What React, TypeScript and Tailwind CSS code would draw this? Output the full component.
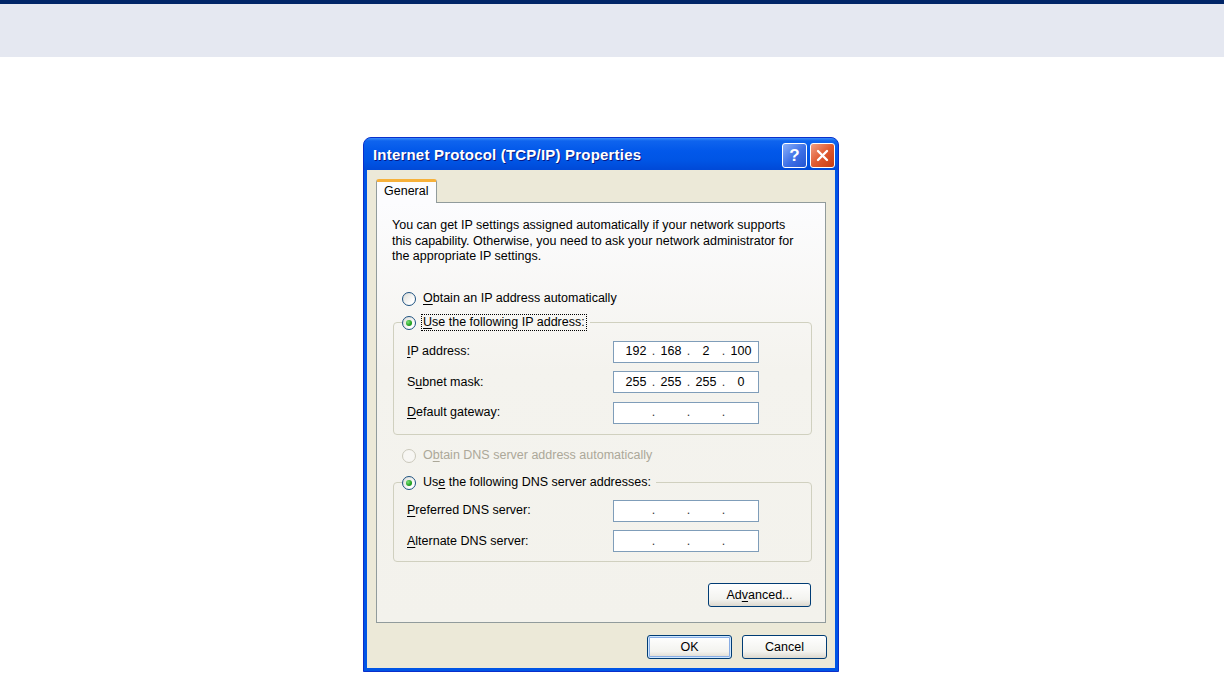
import { Fragment, type ReactNode } from "react";

// Windows XP style "Internet Protocol (TCP/IP) Properties" dialog

function Radio({ checked = false, disabled = false }: { checked?: boolean; disabled?: boolean }) {
  return (
    <span
      className={`flex h-[14px] w-[14px] shrink-0 items-center justify-center rounded-full border ${
        disabled
          ? "border-[#CAC8BB] bg-[#F7F6F3]"
          : "border-[#1C5180] bg-[linear-gradient(135deg,#DCDCD7,#FFFFFF_75%)]"
      }`}
    >
      {checked && (
        <span className="h-[6px] w-[6px] rounded-full bg-[radial-gradient(circle_at_35%_35%,#7BE27A,#21A121_60%,#1A7F1A)]" />
      )}
    </span>
  );
}

function U({ children }: { children: ReactNode }) {
  return <span className="underline decoration-1 underline-offset-[2px]">{children}</span>;
}

function IpField({ parts = ["", "", "", ""] }: { parts?: string[] }) {
  return (
    <div className="flex h-[22px] w-[146px] items-center border border-[#7F9DB9] bg-white pl-[7px] leading-none">
      {parts.map((v, i) => (
        <Fragment key={i}>
          <span className="w-[30px] text-center">{v}</span>
          {i < 3 && <span className="w-[5px] text-center text-[#333]">.</span>}
        </Fragment>
      ))}
    </div>
  );
}

function FieldRow({ label, parts }: { label: ReactNode; parts?: string[] }) {
  return (
    <div className="flex h-[22px] items-center pl-[13px]">
      <span className="w-[206px]">{label}</span>
      <IpField parts={parts} />
    </div>
  );
}

function RadioLabel({
  checked,
  disabled,
  focus,
  children,
}: {
  checked?: boolean;
  disabled?: boolean;
  focus?: boolean;
  children: ReactNode;
}) {
  return (
    <span className="flex h-[16px] items-center gap-[5px]">
      <Radio checked={checked} disabled={disabled} />
      <span
        className={`px-px leading-[15px] ${disabled ? "text-[#ACA899]" : "text-black"} ${
          focus ? "border border-dotted border-black" : "border border-transparent"
        }`}
      >
        {children}
      </span>
    </span>
  );
}

function XpButton({ children, className, isDefault }: { children: ReactNode; className: string; isDefault?: boolean }) {
  return (
    <button
      className={`h-[24px] rounded-[3px] border border-[#003C74] bg-[linear-gradient(to_bottom,#FFFFFF,#F3F3EF_70%,#DCD8CE)] text-[12.5px] text-black ${
        isDefault ? "shadow-[inset_0_0_0_1px_#CEE7FF,inset_0_0_0_2px_#89ADE4]" : ""
      } ${className}`}
    >
      {children}
    </button>
  );
}

export default function App() {
  return (
    <div className="min-h-screen bg-white font-['Liberation_Sans',Arial,sans-serif] text-[12.5px] text-black">
      <div className="h-[4px] bg-[#002568]" />
      <div className="h-[53px] bg-[#E5E8F1]" />

      <div className="pl-[363px] pt-[80px]">
        <div className="w-[476px] rounded-t-[8px] border border-[#0A2FCB] bg-[#0055E5]">
          {/* title bar */}
          <div className="flex h-[32px] items-center rounded-t-[7px] bg-[linear-gradient(to_bottom,#3A8CF9_0%,#0F64EE_9%,#0258EA_40%,#0055E5_70%,#0049D7_100%)] pl-[9px] pr-[3px] pt-[2px]">
            <span className="text-[15px] font-bold tracking-[0.2px] text-white [text-shadow:1px_1px_0_#0A1883]">
              Internet Protocol (TCP/IP) Properties
            </span>
            <div className="ml-auto flex gap-[3px]">
              <div className="flex h-[25px] w-[25px] items-center justify-center rounded-[3px] border border-white bg-[linear-gradient(135deg,#8AB0FA,#3C6FE6_55%,#2455D2)] text-[17px] font-bold leading-none text-white">
                ?
              </div>
              <div className="flex h-[25px] w-[25px] items-center justify-center rounded-[3px] border border-white bg-[linear-gradient(135deg,#F2A085,#E05A30_50%,#C63C14)]">
                <svg width="13" height="13" viewBox="0 0 13 13" aria-hidden>
                  <path d="M2 2L11 11M11 2L2 11" stroke="#fff" strokeWidth="2.4" strokeLinecap="round" />
                </svg>
              </div>
            </div>
          </div>

          {/* body */}
          <div className="px-[3px] pb-[3px]">
            <div className="bg-[#ECE9D8] px-[9px] pb-[9px] pt-[9px]">
              {/* tab */}
              <div className="relative z-10 -mb-px flex h-[24px] w-[61px] items-center rounded-t-[3px] border-x border-t-[3px] border-x-[#919B9C] border-t-[#F7B13A] bg-[#FCFCFE] pl-[7px] pb-[2px]">
                General
              </div>

              {/* panel */}
              <div className="border border-[#919B9C] bg-[linear-gradient(to_bottom,#FCFCFE,#F4F3EE_40%,#F3F2EC)] pb-[15px] pl-[15px] pr-[12px] pt-[15px]">
                <p className="whitespace-nowrap leading-[15.5px]">
                  You can get IP settings assigned automatically if your network supports
                  <br />
                  this capability. Otherwise, you need to ask your network administrator for
                  <br />
                  the appropriate IP settings.
                </p>

                <div className="mt-[26px] pl-[10px]">
                  <RadioLabel>
                    <U>O</U>btain an IP address automatically
                  </RadioLabel>
                </div>

                <fieldset className="ml-[1px] mt-[8px] w-[419px] rounded-[4px] border border-[#D0D0BF] pb-[10px]">
                  <legend className="ml-[8px] pr-[3px]">
                    <RadioLabel checked focus>
                      <U>U</U>se the following IP address:
                    </RadioLabel>
                  </legend>
                  <div className="flex flex-col gap-[8.5px] pt-[10px]">
                    <FieldRow label={<><U>I</U>P address:</>} parts={["192", "168", "2", "100"]} />
                    <FieldRow label={<>S<U>u</U>bnet mask:</>} parts={["255", "255", "255", "0"]} />
                    <FieldRow label={<><U>D</U>efault gateway:</>} />
                  </div>
                </fieldset>

                <div className="mt-[13px] pl-[10px]">
                  <RadioLabel disabled>
                    O<U>b</U>tain DNS server address automatically
                  </RadioLabel>
                </div>

                <fieldset className="ml-[1px] mt-[11px] w-[419px] rounded-[4px] border border-[#D0D0BF] pb-[9px]">
                  <legend className="ml-[8px] pr-[3px]">
                    <RadioLabel checked>
                      Us<U>e</U> the following DNS server addresses:
                    </RadioLabel>
                  </legend>
                  <div className="flex flex-col gap-[8.5px] pt-[9px]">
                    <FieldRow label={<><U>P</U>referred DNS server:</>} />
                    <FieldRow label={<><U>A</U>lternate DNS server:</>} />
                  </div>
                </fieldset>

                <div className="mt-[21px] flex justify-end pr-[2px]">
                  <XpButton className="w-[103px]">
                    Ad<U>v</U>anced...
                  </XpButton>
                </div>
              </div>

              {/* dialog buttons */}
              <div className="-mr-px mt-[12px] flex justify-end gap-[10px]">
                <XpButton className="w-[85px]" isDefault>
                  OK
                </XpButton>
                <XpButton className="w-[85px]">Cancel</XpButton>
              </div>
            </div>
          </div>
        </div>
      </div>
    </div>
  );
}
